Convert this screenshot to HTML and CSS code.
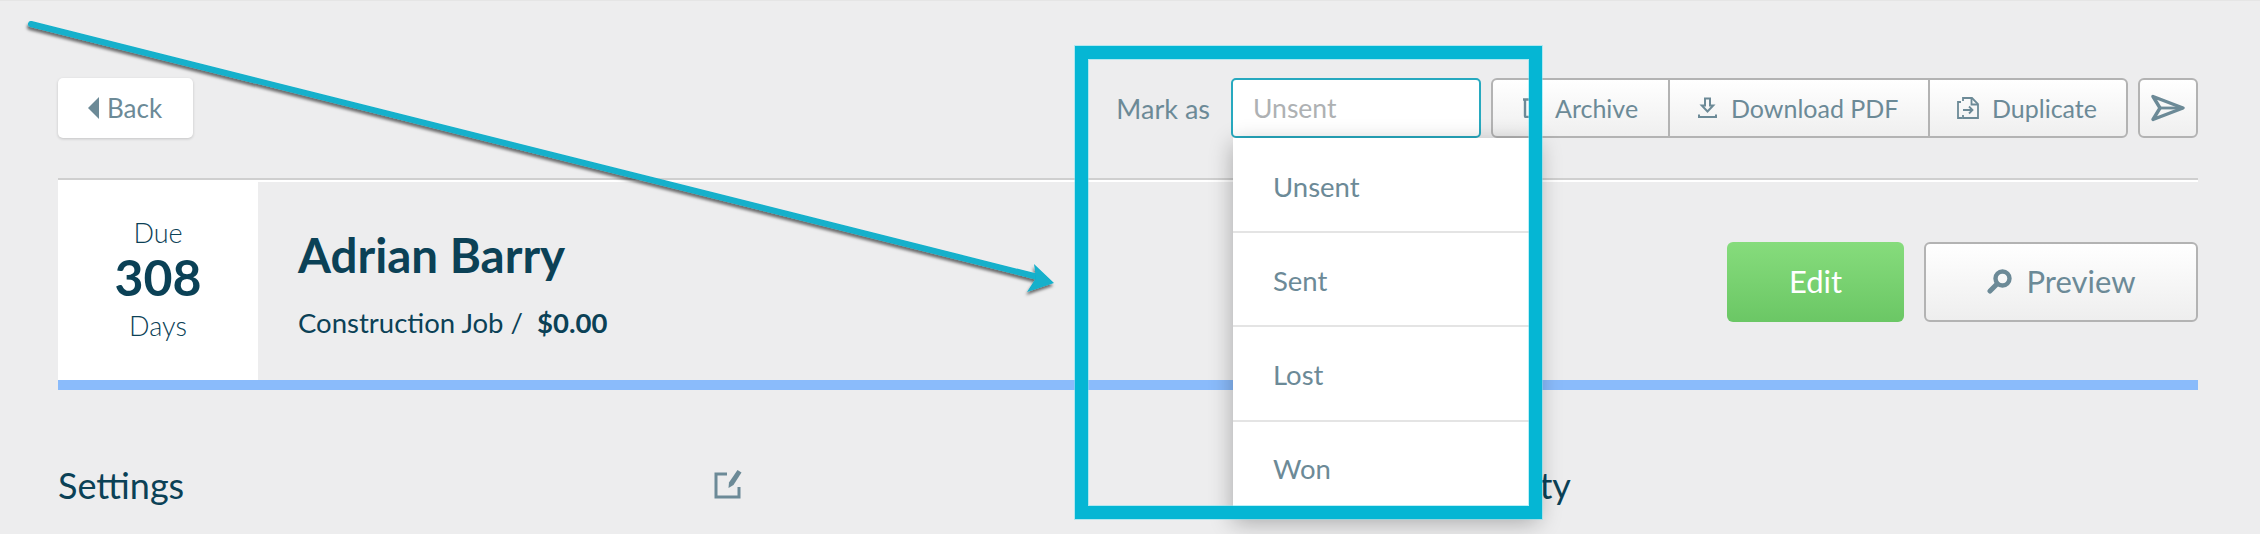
FILE: index.html
```html
<!DOCTYPE html>
<html lang="en">
<head>
    <meta charset="UTF-8">
    <title>Estimate</title>
    <link rel="stylesheet" href="styles.css">
</head>
<body>
    <div class="page">
        <header class="toolbar">
            <a class="back-btn" href="#"><span class="back-caret"></span>Back</a>
            <div class="toolbar-right">
                <span class="mark-label">Mark as</span>
                <div class="mark-field">
                    <div class="mark-input">Unsent</div>
                    <ul class="mark-menu">
                        <li>Unsent</li>
                        <li>Sent</li>
                        <li>Lost</li>
                        <li>Won</li>
                    </ul>
                </div>
                <div class="btn-group">
                    <a class="group-btn btn-archive" href="#">
                        <svg class="icon" width="22" height="20" viewBox="0 0 22 20"><path d="M2 1.500h18M4 1.500V18a1 1 0 0 0 1 1h12a1 1 0 0 0 1-1V1.500" fill="none" stroke="#6c8a97" stroke-width="2.400"/></svg>
                        Archive
                    </a>
                    <a class="group-btn btn-download" href="#">
                        <svg class="icon" width="19" height="22" viewBox="0 0 19 22"><path d="M7 1.500h5v7h3.200L9.500 14.500 3.800 8.500H7z" fill="none" stroke="#6c8a97" stroke-width="2"/><path d="M1 17.500v2.500h17v-2.500" fill="none" stroke="#6c8a97" stroke-width="2"/></svg>
                        Download PDF
                    </a>
                    <a class="group-btn btn-duplicate" href="#">
                        <svg class="icon" width="22" height="22" viewBox="0 0 22 22"><path d="M6 4V1h9l6 6v14H6v-3" fill="none" stroke="#6c8a97" stroke-width="1.800"/><path d="M14.500 1v6.500H21" fill="none" stroke="#6c8a97" stroke-width="1.800"/><path d="M4 5H1v16h4" fill="none" stroke="#6c8a97" stroke-width="1.800"/><path d="M6 13h9M12 9.500l3.500 3.500-3.500 3.500" fill="none" stroke="#6c8a97" stroke-width="1.800"/></svg>
                        Duplicate
                    </a>
                </div>
                <a class="send-btn" href="#">
                    <svg width="34" height="28" viewBox="0 0 34 28"><path d="M2 2.500 32 14 2 25.500 9 14z" fill="none" stroke="#6c8a97" stroke-width="3.400" stroke-linejoin="round"/><path d="M9 14H32" stroke="#6c8a97" stroke-width="2.800"/></svg>
                </a>
            </div>
        </header>

        <section class="job-head">
            <div class="due-box">
                <div class="due-label">Due</div>
                <div class="due-num">308</div>
                <div class="due-label due-days">Days</div>
            </div>
            <div class="job-info">
                <h1 class="job-name">Adrian Barry</h1>
                <p class="job-sub">Construction Job /&nbsp; <b>$0.00</b></p>
            </div>
            <div class="job-actions">
                <a class="btn-edit" href="#">Edit</a>
                <a class="btn-preview" href="#">
                    <svg width="25" height="25" viewBox="0 0 25 25"><circle cx="15.500" cy="9.500" r="7" fill="none" stroke="#6c8a97" stroke-width="4.400"/><path d="M10 15 3 22" stroke="#6c8a97" stroke-width="5" stroke-linecap="round"/></svg>
                    Preview
                </a>
            </div>
        </section>

        <section class="columns">
            <div class="col-settings">
                <h2>Settings</h2>
                <svg class="edit-icon" width="28" height="29" viewBox="0 0 28 29"><path d="M13 4H2v23h23V17" fill="none" stroke="#6c8a97" stroke-width="3"/><path d="M23.500 0l4 2.500-8 12.500-5 3 .5-5.500z" fill="#6c8a97"/></svg>
            </div>
            <div class="col-activity">
                <h2>Activity</h2>
            </div>
        </section>
    </div>

    <!-- annotation on top of the screenshot -->
    <div class="note-box"></div>
    <svg class="note-arrow" width="1080" height="300" viewBox="0 0 1080 300">
        <defs>
            <filter id="arrow-shadow" x="-5%" y="-20%" width="110%" height="140%">
                <feDropShadow dx="-1" dy="3" stdDeviation="1.500" flood-color="#000" flood-opacity="0.55"/>
            </filter>
        </defs>
        <g filter="url(#arrow-shadow)">
            <path d="M31 24 1038 277" stroke="#12b0cb" stroke-width="6" stroke-linecap="round"/>
            <path d="M1034 264 1054 283 1027 292 1036 278z" fill="#12b0cb"/>
        </g>
    </svg>
</body>
</html>
```

FILE: styles.css
```css
:root {
    --bg-color: #ededee;
    --text-dark: #0b4156;
    --text-slate: #6c8a97;
    --line: #b3b3b3;
    --note: #05b6d4;
}

* {
    box-sizing: border-box;
    margin: 0;
    padding: 0;
}

html, body {
    height: 534px;
    overflow: hidden;
}

body {
    position: relative;
    font-family: 'Lato', 'Open Sans', sans-serif;
    background-color: var(--bg-color);
    color: var(--text-slate);
    font-size: 27px;
}

a {
    color: inherit;
    text-decoration: none;
}

.page {
    padding: 77px 62px 0 58px;
    border-top: 1px solid #e5e5e5;
}

/* Top row */
.toolbar {
    display: flex;
    justify-content: space-between;
    align-items: flex-start;
    height: 102px;
    border-bottom: 2px solid #cfcfcf;
}

.back-btn {
    display: flex;
    align-items: center;
    width: 135px;
    height: 60px;
    padding-left: 30px;
    font-size: 26px;
    background: #fff;
    border-radius: 5px;
    box-shadow: 0 1px 3px rgba(0, 0, 0, 0.18);
}

.back-caret {
    width: 0;
    height: 0;
    margin-right: 8px;
    border-top: 11px solid transparent;
    border-bottom: 11px solid transparent;
    border-right: 11px solid var(--text-slate);
}

.toolbar-right {
    display: flex;
    align-items: center;
    height: 60px;
}

.mark-label {
    margin-right: 21px;
}

.mark-field {
    position: relative;
    width: 250px;
    margin-right: 10px;
}

.mark-input {
    display: flex;
    align-items: center;
    height: 60px;
    padding: 0 0 1px 20px;
    font-size: 26.500px;
    color: #aeb1b3;
    background: #fff;
    border: 2px solid #27a9bf;
    border-radius: 5px;
}

.mark-menu {
    position: absolute;
    top: 60px;
    left: 2px;
    z-index: 5;
    width: 305px;
    padding-top: 1px;
    list-style: none;
    font-size: 27.500px;
    background: #fff;
    box-shadow: 0 6px 22px rgba(0, 0, 0, 0.3);
}

.mark-menu li {
    display: flex;
    align-items: center;
    height: 94.200px;
    padding: 2px 0 0 40px;
    border-bottom: 2px solid #e4e4e4;
}

.btn-group {
    display: flex;
    height: 60px;
    margin-right: 10px;
    border: 2px solid var(--line);
    border-radius: 6px;
    font-size: 25px;
    background: linear-gradient(#ffffff, #efefef);
}

.group-btn {
    display: flex;
    align-items: center;
    height: 100%;
    white-space: nowrap;
}

.group-btn + .group-btn {
    border-left: 2px solid var(--line);
}

.btn-archive { width: 175px; padding-left: 28px; gap: 12px; }
.btn-download { width: 260px; padding-left: 28px; gap: 14px; }
.btn-duplicate { width: 198px; padding-left: 27px; gap: 13px; }

.send-btn {
    display: flex;
    align-items: center;
    justify-content: center;
    width: 60px;
    height: 60px;
    border: 2px solid var(--line);
    border-radius: 6px;
    background: linear-gradient(#ffffff, #efefef);
}

/* Job title row */
.job-head {
    display: flex;
    align-items: center;
    height: 210px;
    border-top: 2px solid #fff;
    border-bottom: 10px solid #8abbfb;
}

.due-box {
    width: 200px;
    height: 100%;
    padding-top: 35px;
    text-align: center;
    background: #fff;
    color: var(--text-dark);
}

.due-label {
    font-weight: 300;
    line-height: 32px;
}

.due-num {
    margin-top: 1px;
    font-size: 50px;
    font-weight: 700;
    line-height: 54px;
}

.due-days {
    margin-top: 6px;
}

.job-info {
    flex: 1;
    padding: 3px 0 0 40px;
    color: var(--text-dark);
}

.job-name {
    font-size: 47.500px;
    font-weight: 700;
    line-height: 56px;
}

.job-sub {
    margin-top: 24px;
    font-size: 27.500px;
    line-height: 32px;
}

.job-actions {
    display: flex;
    gap: 20px;
    margin-top: 2px;
}

.btn-edit,
.btn-preview {
    display: flex;
    align-items: center;
    justify-content: center;
    height: 80px;
    padding-bottom: 2px;
    font-size: 31px;
    border-radius: 6px;
}

.btn-edit {
    width: 177px;
    color: #fff;
    background: linear-gradient(#86dc7c, #6bc765);
}

.btn-preview {
    gap: 15px;
    width: 274px;
    border: 2px solid var(--line);
    background: linear-gradient(#ffffff, #eeeeee);
}

/* Bottom columns */
.columns {
    display: flex;
    margin-top: 74px;
    color: var(--text-dark);
}

.columns h2 {
    font-size: 36px;
    font-weight: 400;
    line-height: 42px;
}

.col-settings {
    display: flex;
    justify-content: space-between;
    width: 684px;
}

.edit-icon {
    margin-top: 6px;
}

.col-activity {
    margin-left: 707px;
}

/* Annotation */
.note-box {
    position: absolute;
    left: 1075px;
    top: 46px;
    z-index: 10;
    width: 467px;
    height: 473px;
    border: 13px solid var(--note);
    box-shadow: 0 0 0 1px rgba(120, 225, 240, 0.5), inset 0 0 0 1px rgba(120, 225, 240, 0.5);
}

.note-arrow {
    position: absolute;
    left: 0;
    top: 0;
    z-index: 11;
}
```
